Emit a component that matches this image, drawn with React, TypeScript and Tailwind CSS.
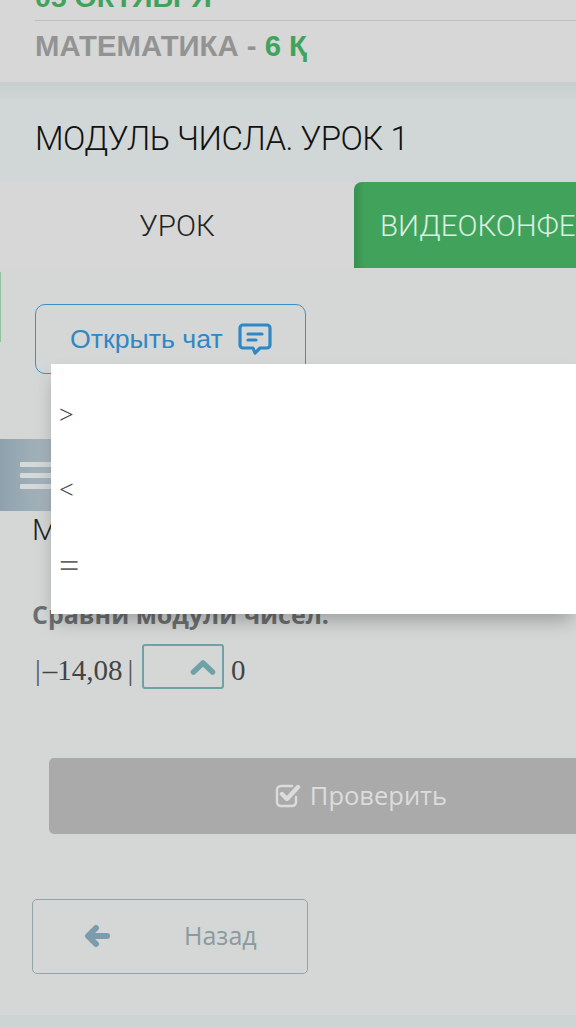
const sans = "font-['Open_Sans',sans-serif]";

function ChatIcon() {
  return (
    <svg width="34" height="32" viewBox="0 0 34 32" fill="none" stroke="#2f88c5" strokeWidth="3.2" strokeLinejoin="round" strokeLinecap="round">
      <path d="M5 2h24a3 3 0 0 1 3 3v17a3 3 0 0 1-3 3h-7l-5 5-2-5H5a3 3 0 0 1-3-3V5a3 3 0 0 1 3-3z" />
      <path d="M10 11h14M10 17h8" />
    </svg>
  );
}

function CheckIcon() {
  return (
    <svg width="26" height="25" viewBox="0 0 26 25" fill="none" stroke="#dcdcdc" strokeLinecap="round" strokeLinejoin="round">
      <path d="M21 14v5a4 4 0 0 1-4 4H6a4 4 0 0 1-4-4V7a4 4 0 0 1 4-4h11" strokeWidth="2.4" />
      <path d="M7 11l5 5L23 4" strokeWidth="4.4" />
    </svg>
  );
}

function ArrowIcon() {
  return (
    <svg width="26" height="24" viewBox="0 0 26 24" fill="none" stroke="#7c9bac" strokeWidth="6" strokeLinecap="round" strokeLinejoin="round">
      <path d="M12 4l-8 8 8 8M5 12h18" />
    </svg>
  );
}

function ChevronIcon() {
  return (
    <svg width="26" height="16" viewBox="0 0 26 16" fill="none" stroke="#6fa2a6" strokeWidth="5.5" strokeLinecap="round" strokeLinejoin="round">
      <path d="M3.5 13L13 4l9.5 9" />
    </svg>
  );
}

export default function App() {
  return (
    <div className="relative w-[576px] h-[1028px] overflow-hidden bg-[#d5d7d6] font-['Liberation_Sans',sans-serif]">
      <header className="h-[82px] pl-[35px] bg-[#d6d7d6]">
        <div className="h-[21px] border-b border-[#bcc1c0] overflow-hidden">
          <div className="-mt-[19px] text-[28.5px] leading-[32px] font-bold text-[#41a35b]">05 ОКТЯБРЯ</div>
        </div>
        <div className="mt-[9px] text-[29.3px] leading-[32px] font-bold text-[#939393]">
          МАТЕМАТИКА - <span className="text-[#41a35b]">6 Қ</span>
        </div>
      </header>

      <div className="h-[100px] pl-[35px] pt-[12px] flex items-center bg-gradient-to-b from-[#c8cece] to-[#d1d6d6] to-[20%]">
        <h1 className="font-['Roboto',sans-serif] font-light text-[#111] text-[33px] tracking-[-0.5px] leading-none">МОДУЛЬ ЧИСЛА. УРОК 1</h1>
      </div>

      <div className="flex h-[86px] font-['Roboto',sans-serif] font-light text-[29.5px]">
        <div className="w-[354px] shrink-0 flex items-center justify-center pt-[3px] bg-[#d6d7d6] text-[#222]">
          УРОК
        </div>
        <div className="flex-1 min-w-0 flex items-center pt-[3px] pl-[26px] rounded-tl-[8px] bg-gradient-to-r from-[#37904f] to-[#41a35b] to-[5%] overflow-hidden whitespace-nowrap text-[#dcefe0]">
          ВИДЕОКОНФЕРЕНЦИЯ
        </div>
      </div>

      <main className="relative h-[747px]">
        <div className="absolute left-0 top-[4px] w-[1px] h-[70px] bg-[#8fc29d]" />

        <div className="pt-[36px] pl-[35px]">
          <button className="w-[271px] h-[70px] flex items-center gap-[15px] pl-[34px] rounded-[10px] border border-[#3d8fc6] text-[#2f88c5] text-[26.7px]">
            <span>Открыть чат</span>
            <ChatIcon />
          </button>
        </div>

        <div className="mt-[65px] w-[72px] h-[72px] flex flex-col justify-center gap-[6px] pl-[20px] bg-gradient-to-r from-[#8ea2ae] to-[#b3bec3]">
          <div className="h-[5px] bg-[#d5d9da] rounded-[1px]" />
          <div className="h-[5px] bg-[#d5d9da] rounded-[1px]" />
          <div className="h-[5px] bg-[#d5d9da] rounded-[1px]" />
        </div>

        <p className="mt-[1px] pl-[32px] h-[36px] font-['Roboto',sans-serif] font-light text-[30px] leading-[36px] text-[#222]">Модуль</p>

        <p className={`mt-[50px] pl-[32px] text-[25px] leading-[32px] font-bold text-[#6c6f70] ${sans}`}>Сравни модули чисел.</p>

        <div className="mt-[14px] pl-[35px] h-[45px] flex items-center font-['Liberation_Serif',serif] text-[29px] text-[#444]">
          <span className="w-[107px] mt-[8px] flex">
            <span className="text-[#555]">|</span>
            <span className="ml-[2px]">–14,08</span>
            <span className="ml-[5px] text-[#555]">|</span>
          </span>
          <div className="w-[82px] h-[45px] flex items-center justify-end pr-[6px] rounded-[3px] border-[2px] border-[#6fa2a6]">
            <ChevronIcon />
          </div>
          <span className="ml-[7px] mt-[8px]">0</span>
        </div>

        <button className={`ml-[49px] mt-[69px] w-[624px] h-[76px] flex items-center justify-center gap-[9px] pb-[2px] rounded-[5px] bg-[#aaaaaa] text-[#dcdcdc] text-[25.5px] ${sans}`}>
          <CheckIcon />
          <span>Проверить</span>
        </button>

        <button className={`ml-[32px] mt-[65px] w-[276px] h-[75px] flex items-center pl-[51px] pb-[1px] rounded-[5px] border border-[#93a3a9] text-[#8b9a9f] text-[25px] ${sans}`}>
          <ArrowIcon />
          <span className="ml-[74px]">Назад</span>
        </button>

        {/* open select list */}
        <ul className="absolute left-[51px] top-[96px] right-0 h-[250px] bg-white shadow-[0_10px_18px_-4px_rgba(0,0,0,0.28)] pt-[13px] font-['Liberation_Serif',serif] text-[26px] text-[#444]">
          <li className="h-[75px] pl-[8px] flex items-center">&gt;</li>
          <li className="h-[75px] pl-[8px] flex items-center">&lt;</li>
          <li className="h-[75px] pl-[8px] pt-[2px] flex items-center text-[36px] text-[#666]">=</li>
        </ul>
      </main>

      <footer className="h-[13px] bg-[#cdd4d3]" />
    </div>
  );
}
